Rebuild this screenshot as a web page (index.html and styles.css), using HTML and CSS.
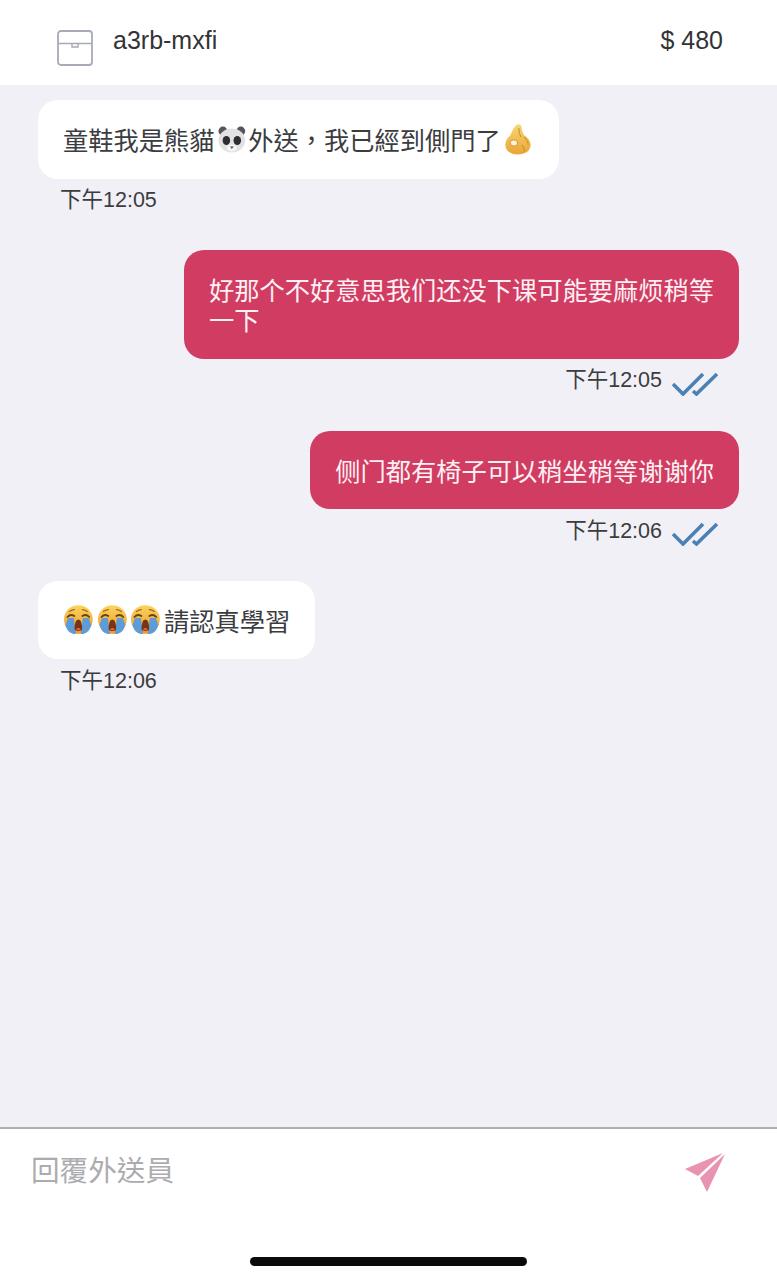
FILE: index.html
```html
<!DOCTYPE html>
<html lang="zh-Hant">
<head>
<meta charset="utf-8">
<title>Chat</title>
<link rel="stylesheet" href="styles.css">
</head>
<body>
<svg class="defs" width="0" height="0" aria-hidden="true">
  <defs>
    <linearGradient id="face" x1="0" y1="0" x2="0" y2="1">
      <stop offset="0" stop-color="#fbd45c"/>
      <stop offset="1" stop-color="#ec9a2c"/>
    </linearGradient>
    <linearGradient id="hand" x1="0" y1="0" x2="0" y2="1">
      <stop offset="0" stop-color="#f9d673"/>
      <stop offset="1" stop-color="#e8a536"/>
    </linearGradient>
    <symbol id="cry" viewBox="0 0 34 32">
      <circle cx="15.500" cy="15.500" r="14.500" fill="url(#face)"/>
      <path d="M5 14h6l2 16q-1 .500-3 0q-6-2-7.500-9z" fill="#5f9bd6"/>
      <path d="M26 14h-6l-2 16q1 .500 3 0q6-2 7.500-9z" fill="#5f9bd6"/>
      <path d="M4.500 13q3-3.500 7-1M26.500 13q-3-3.500-7-1" fill="none" stroke="#6b4218" stroke-width="1.800" stroke-linecap="round"/>
      <path d="M6.500 7.500q2.500-2 5-2M24.500 7.500q-2.500-2-5-2" fill="none" stroke="#a06a20" stroke-width="1.300" stroke-linecap="round"/>
      <path d="M11.800 26q-.5-10 3.700-10.500q4.200 .5 3.700 10.500q-3.700 2-7.400 0z" fill="#7a3414"/>
      <path d="M13 25.500q2.500-3 5 0q-2.500 1.500-5 0z" fill="#e8614a"/>
    </symbol>
  </defs>
</svg>

<header class="topbar">
  <svg class="box-icon" viewBox="0 0 36 36" aria-hidden="true">
    <rect x="1" y="1" width="34" height="34" rx="3" fill="none" stroke="#a6aabb" stroke-width="1.800"/>
    <path d="M1 13.500H35" stroke="#a6aabb" stroke-width="1.500"/>
    <path d="M15 13.500v3.500h6v-3.500" fill="none" stroke="#a6aabb" stroke-width="1.400"/>
  </svg>
  <div class="order-id">a3rb-mxfi</div>
  <div class="price">$ 480</div>
</header>

<main class="messages">
  <section class="msg">
    <div class="bubble bubble-in">童鞋我是熊貓<svg class="emoji" viewBox="0 0 34 32" aria-hidden="true">
        <circle cx="8" cy="8" r="4.500" fill="#55555a"/>
        <circle cx="26" cy="8" r="4.500" fill="#55555a"/>
        <ellipse cx="17" cy="17.500" rx="13.500" ry="12" fill="#e2e2e4"/>
        <ellipse cx="11.500" cy="17.500" rx="3.800" ry="4.600" fill="#2e2e30"/>
        <ellipse cx="22.500" cy="17.500" rx="3.800" ry="4.600" fill="#2e2e30"/>
        <ellipse cx="17" cy="25" rx="5" ry="3.500" fill="#f6f6f6"/>
        <path d="M15 23.500h4l-2 2.500z" fill="#555"/>
      </svg>外送，我已經到側門了<svg class="emoji" viewBox="0 0 34 32" aria-hidden="true">
        <path d="M9 13Q12 5 16 1.500Q19 0 20.500 3Q21 8 23 12Q29 15 30 22Q29.500 29 22 31Q14 33 8 29Q3 25 5 18Q6 15 9 13z" fill="url(#hand)"/>
        <ellipse cx="13" cy="20" rx="3.800" ry="3.200" fill="#fff4d6" stroke="#d1932f" stroke-width="1"/>
        <path d="M18 5Q18 10 20 14M23 14Q27 17 27.500 22M21 22Q24 26 23.500 29" stroke="#cf9230" stroke-width="1.100" fill="none"/>
      </svg></div>
    <div class="meta">下午12:05</div>
  </section>

  <section class="msg msg-out">
    <div class="bubble bubble-out">好那个不好意思我们还没下课可能要麻烦稍等一下</div>
    <div class="meta">下午12:05<svg class="ticks" viewBox="0 0 46 24" aria-hidden="true"><path d="M1 12l10 10L31 2M21 19l3.500 3L45 2" fill="none" stroke="#4a80b4" stroke-width="3.600"/></svg></div>
  </section>

  <section class="msg msg-out">
    <div class="bubble bubble-out">侧门都有椅子可以稍坐稍等谢谢你</div>
    <div class="meta">下午12:06<svg class="ticks" viewBox="0 0 46 24" aria-hidden="true"><path d="M1 12l10 10L31 2M21 19l3.500 3L45 2" fill="none" stroke="#4a80b4" stroke-width="3.600"/></svg></div>
  </section>

  <section class="msg">
    <div class="bubble bubble-in"><svg class="emoji"><use href="#cry"/></svg><svg class="emoji"><use href="#cry"/></svg><svg class="emoji"><use href="#cry"/></svg>請認真學習</div>
    <div class="meta">下午12:06</div>
  </section>
</main>

<footer class="composer">
  <div class="composer-row">
    <div class="placeholder">回覆外送員</div>
    <svg class="send" viewBox="0 0 42 42" aria-hidden="true">
      <path d="M1 18L39 2 14 25z" fill="#e993b3"/>
      <path d="M41 3L23 41 16 27z" fill="#e993b3"/>
    </svg>
  </div>
  <div class="home-indicator"></div>
</footer>
</body>
</html>
```

FILE: styles.css
```css
* {
  box-sizing: border-box;
}

html,
body {
  margin: 0;
  height: 100%;
}

body {
  width: 777px;
  height: 1280px;
  display: flex;
  flex-direction: column;
  overflow: hidden;
  background: #f0f0f6;
  color: #333336;
  font-family: "Liberation Sans", "Noto Sans CJK TC", sans-serif;
}

.defs {
  position: absolute;
}

.topbar {
  height: 85px;
  flex: none;
  display: flex;
  align-items: flex-start;
  gap: 20px;
  padding: 25px 54px 0 57px;
  background: #fff;
}

.box-icon {
  width: 36px;
  height: 36px;
  margin-top: 5px;
  flex: none;
}

.order-id,
.price {
  font-size: 25px;
  line-height: 30px;
}

.price {
  margin-left: auto;
}

.messages {
  flex: 1;
  display: flex;
  flex-direction: column;
  gap: 33.750px;
  padding: 15px 38px 0;
}

.msg {
  display: flex;
  flex-direction: column;
  align-items: flex-start;
}

.msg-out {
  align-items: flex-end;
}

.bubble {
  max-width: 555px;
  padding: 24px 25px 24.500px;
  font-family: "Noto Sans CJK TC", "Liberation Sans", sans-serif;
  font-size: 25.250px;
  line-height: 30px;
  border-radius: 20px;
}

.bubble-in {
  background: #fff;
  color: #3c3c3f;
}

.bubble-out {
  background: #d03c62;
  color: #fdf0f3;
  font-family: "Noto Sans CJK SC", "Liberation Sans", sans-serif;
}

.emoji {
  display: inline-block;
  width: 33.700px;
  height: 32px;
  margin: -1px 0;
  vertical-align: top;
}

.meta {
  display: flex;
  align-items: center;
  height: 38px;
  padding: 0 22px;
  font-family: "Liberation Sans", "Noto Sans CJK TC", sans-serif;
  font-size: 21.500px;
  color: #3c3c3f;
}

.msg-out .meta {
  padding: 0 21px 0 0;
}

.ticks {
  width: 46px;
  height: 24px;
  margin: 12px 0 0 10px;
}

.composer {
  flex: none;
  height: 153px;
  display: flex;
  flex-direction: column;
  background: #fff;
  border-top: 2px solid #aeaeae;
}

.composer-row {
  display: flex;
  align-items: flex-start;
  justify-content: space-between;
  padding: 20px 51px 0 31px;
}

.placeholder {
  font-family: "Noto Sans CJK TC", sans-serif;
  font-size: 28.600px;
  line-height: 40px;
  color: #acacb0;
}

.send {
  width: 42px;
  height: 42px;
  margin-top: 2px;
  flex: none;
}

.home-indicator {
  width: 277px;
  height: 9px;
  margin: auto auto 14px;
  border-radius: 5px;
  background: #0a0a0a;
}
```
